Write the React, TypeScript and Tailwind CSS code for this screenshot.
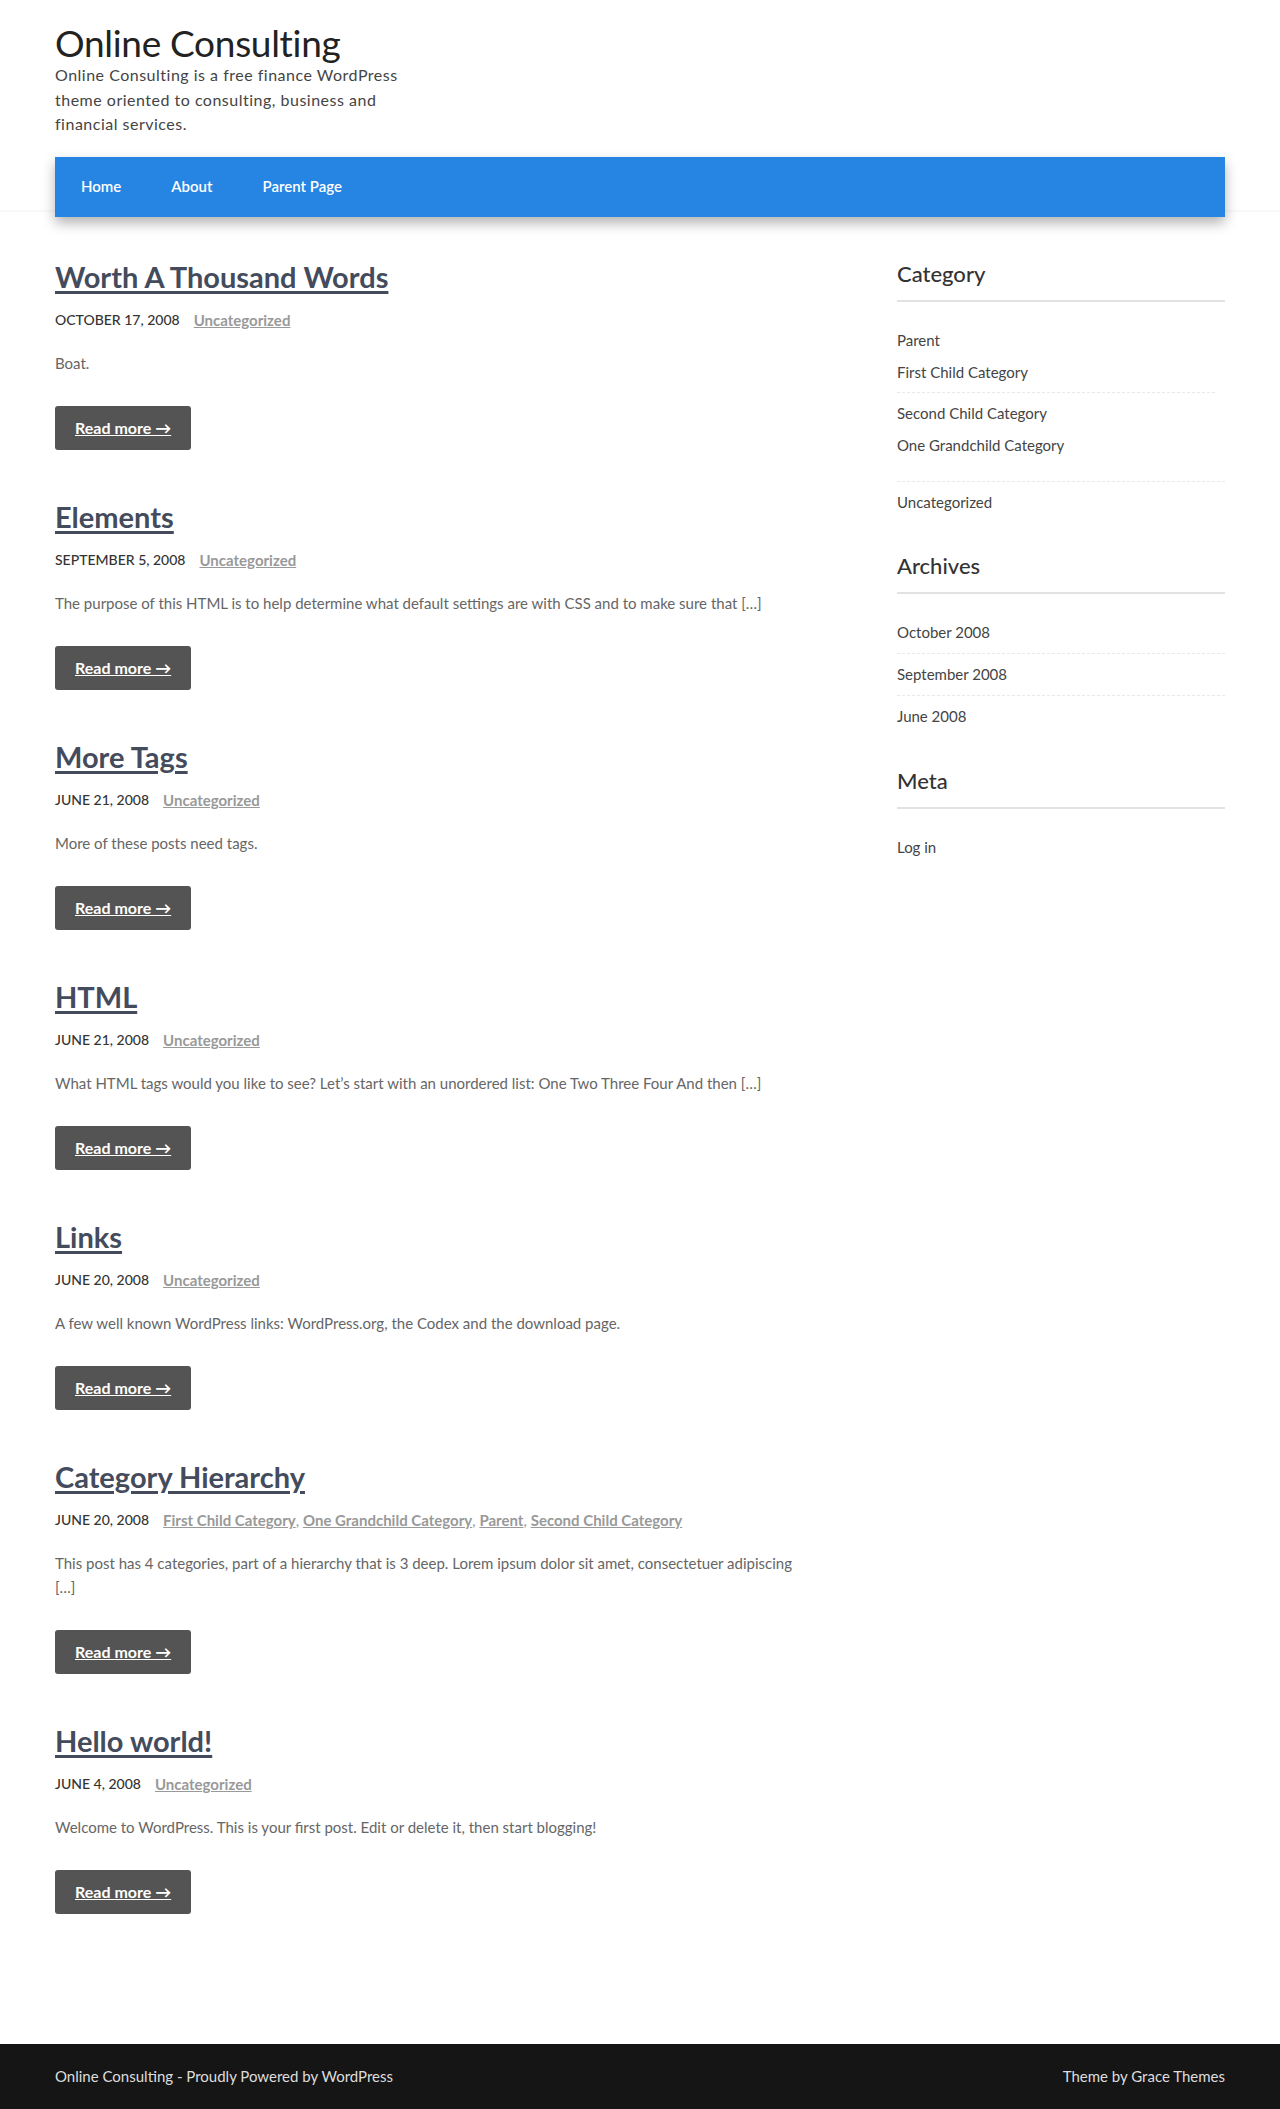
const posts = [
  {
    title: 'Worth A Thousand Words',
    date: 'October 17, 2008',
    cats: ['Uncategorized'],
    excerpt: 'Boat.',
  },
  {
    title: 'Elements',
    date: 'September 5, 2008',
    cats: ['Uncategorized'],
    excerpt:
      'The purpose of this HTML is to help determine what default settings are with CSS and to make sure that […]',
  },
  {
    title: 'More Tags',
    date: 'June 21, 2008',
    cats: ['Uncategorized'],
    excerpt: 'More of these posts need tags.',
  },
  {
    title: 'HTML',
    date: 'June 21, 2008',
    cats: ['Uncategorized'],
    excerpt:
      'What HTML tags would you like to see? Let’s start with an unordered list: One Two Three Four And then […]',
  },
  {
    title: 'Links',
    date: 'June 20, 2008',
    cats: ['Uncategorized'],
    excerpt: 'A few well known WordPress links: WordPress.org, the Codex and the download page.',
  },
  {
    title: 'Category Hierarchy',
    date: 'June 20, 2008',
    cats: ['First Child Category', 'One Grandchild Category', 'Parent', 'Second Child Category'],
    excerpt:
      'This post has 4 categories, part of a hierarchy that is 3 deep. Lorem ipsum dolor sit amet, consectetuer adipiscing […]',
  },
  {
    title: 'Hello world!',
    date: 'June 4, 2008',
    cats: ['Uncategorized'],
    excerpt: 'Welcome to WordPress. This is your first post. Edit or delete it, then start blogging!',
  },
];

const font = { fontFamily: 'Lato, "Open Sans", sans-serif' };

function Post({ post }: { post: (typeof posts)[number] }) {
  return (
    <article className="mb-[47px]">
      <h2 className="text-[29px] font-bold leading-[40px] text-[#434b5c]">
        <a href="#" className="underline decoration-[3px] underline-offset-[3px]">
          {post.title}
        </a>
      </h2>
      <div className="mt-[11px] flex items-center leading-[24px]">
        <span className="text-[14px] font-medium uppercase text-[#333]">{post.date}</span>
        <span className="ml-[14px] text-[15px] text-[#999]">
          {post.cats.map((cat, i) => (
            <span key={cat}>
              <a href="#" className="font-bold underline">
                {cat}
              </a>
              {i < post.cats.length - 1 ? ', ' : null}
            </span>
          ))}
        </span>
      </div>
      <p className="mt-[19px] text-[15px] leading-[24px] text-[#666]">{post.excerpt}</p>
      <a
        href="#"
        className="mt-[31px] inline-flex h-[44px] items-center rounded-[3px] bg-[#545454] px-[20px] text-[16px] font-bold text-white underline"
      >
        Read more →
      </a>
    </article>
  );
}

function WidgetTitle({ children }: { children: React.ReactNode }) {
  return (
    <h3 className="border-b-2 border-[#e2e2e2] pb-[11px] text-[22px] font-medium leading-[30px] text-[#333]">
      {children}
    </h3>
  );
}

export default function App() {
  return (
    <div className="min-h-[2109px] bg-white" style={font}>
      <header className="h-[210px] bg-white shadow-[0_0_4px_rgba(0,0,0,0.09)]">
        <div className="mx-auto w-[1170px] pt-[23px]">
          <h1 className="text-[37px] font-normal leading-[40px] tracking-[-0.3px] text-[#222]">
            Online Consulting
          </h1>
          <p className="w-[370px] text-[16px] leading-[24.5px] tracking-[0.5px] text-[#444]">
            Online Consulting is a free finance WordPress theme oriented to consulting, business and financial
            services.
          </p>
          <nav className="relative z-10 mt-[20px] flex h-[60px] items-center bg-[#2685e3] px-[1px] shadow-[0_6px_12px_rgba(0,0,0,0.3)]">
            {['Home', 'About', 'Parent Page'].map((item) => (
              <a key={item} href="#" className="px-[25px] text-[15px] font-semibold text-white">
                {item}
              </a>
            ))}
          </nav>
        </div>
      </header>

      <div className="mx-auto flex w-[1170px] pt-[47px]">
        <main className="w-[750px]">
          {posts.map((post) => (
            <Post key={post.title} post={post} />
          ))}
        </main>

        <aside className="ml-auto w-[328px] pt-[2px] text-[15px] leading-[24px] text-[#444]">
          <section>
            <WidgetTitle>Category</WidgetTitle>
            <ul className="mt-[18px]">
              <li className="border-b border-dashed border-[#e8e8e8] py-[8px]">
                <a href="#">Parent</a>
                <ul>
                  <li className="mr-[10px] border-b border-dashed border-[#e8e8e8] pb-[8px] pt-[8px]">
                    <a href="#">First Child Category</a>
                  </li>
                  <li className="pb-[8px] pt-[8px]">
                    <a href="#">Second Child Category</a>
                    <ul>
                      <li className="pb-[8px] pt-[8px]">
                        <a href="#">One Grandchild Category</a>
                      </li>
                    </ul>
                  </li>
                </ul>
              </li>
              <li className="py-[8px]">
                <a href="#">Uncategorized</a>
              </li>
            </ul>
          </section>

          <section className="mt-[29px]">
            <WidgetTitle>Archives</WidgetTitle>
            <ul className="mt-[18px]">
              {['October 2008', 'September 2008', 'June 2008'].map((m, i, arr) => (
                <li
                  key={m}
                  className={
                    i < arr.length - 1
                      ? 'border-b border-dashed border-[#e8e8e8] pb-[9px] pt-[8px]'
                      : 'pb-[9px] pt-[8px]'
                  }
                >
                  <a href="#">{m}</a>
                </li>
              ))}
            </ul>
          </section>

          <section className="mt-[29px]">
            <WidgetTitle>Meta</WidgetTitle>
            <ul className="mt-[18px]">
              <li className="py-[8px]">
                <a href="#">Log in</a>
              </li>
            </ul>
          </section>
        </aside>
      </div>

      <footer className="mt-[83px] bg-[#151515]">
        <div className="mx-auto flex h-[65px] w-[1170px] items-center justify-between text-[15px] text-[#ddd]">
          <span>Online Consulting - Proudly Powered by WordPress</span>
          <span>Theme by Grace Themes</span>
        </div>
      </footer>
    </div>
  );
}
